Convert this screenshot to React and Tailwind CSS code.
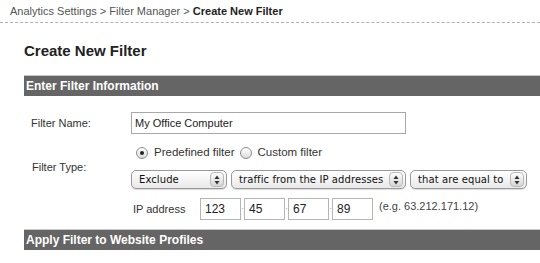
import React from 'react'

// Aqua-style stepper arrows on the right of a select
function Arrows() {
  return (
    <span className="flex h-[15px] w-[14px] shrink-0 items-center justify-center rounded-[4px] border border-[#b9b9b9] bg-gradient-to-b from-[#fdfdfd] to-[#d6d6d6]">
      <svg width="6" height="10" viewBox="0 0 6 10">
        <path d="M3 0.5 L5.5 4 L0.5 4 Z" fill="#333" />
        <path d="M3 9.5 L5.5 6 L0.5 6 Z" fill="#333" />
      </svg>
    </span>
  )
}

function Select({ label, width }) {
  return (
    <div
      className={`flex h-[19px] items-center justify-between rounded-[5px] border border-[#9a9a9a] bg-gradient-to-b from-white to-[#e9e9e9] pl-[7px] pr-[2px] font-['DejaVu_Sans',sans-serif] text-[10px] tracking-[0.1px] text-[#111] shadow-[0_1px_1px_rgba(0,0,0,0.15)] ${width}`}
    >
      <span className="whitespace-nowrap">{label}</span>
      <Arrows />
    </div>
  )
}

function Radio({ checked }) {
  return (
    <span className="flex h-[12px] w-[12px] items-center justify-center rounded-full border border-[#8d8d8d] bg-gradient-to-b from-white to-[#dcdcdc]">
      {checked && <span className="h-[4px] w-[4px] rounded-full bg-[#222]" />}
    </span>
  )
}

function IpBox({ value }) {
  return (
    <div className="flex h-[22px] w-[41px] items-center border border-[#b5b5b5] pl-[4px] text-[12px] text-[#222]">
      {value}
    </div>
  )
}

export default function App() {
  return (
    <div className="h-[263px] w-[540px] overflow-hidden bg-white font-['Liberation_Sans',Arial,sans-serif] text-[#333]">
      {/* breadcrumb */}
      <div className="h-[23px] border-b border-dashed border-[#b0b0b0] pl-[10px] pt-[4px] text-[11px] leading-[15px] text-[#555]">
        Analytics Settings &gt; Filter Manager &gt; <b className="text-[#222]">Create New Filter</b>
      </div>

      <div className="pl-[24px]">
        <h1 className="mt-[19px] text-[15px] font-bold leading-[17px] text-[#222]">Create New Filter</h1>

        <div className="mt-[16px] h-[21px] border-t border-[#c8c8c8] bg-[#656565] pl-[2px] text-[12px] font-bold leading-[20px] text-white">
          Enter Filter Information
        </div>

        {/* Filter Name */}
        <div className="mt-[16px] flex items-center text-[11px]">
          <div className="w-[107px] pl-[7px]">Filter Name:</div>
          <div className="flex h-[22px] w-[275px] items-center border border-[#a8a8a8] pl-[3px] text-[11px] text-[#222]">
            My Office Computer
          </div>
        </div>

        {/* Filter Type */}
        <div className="mt-[12px] flex items-center text-[11px]">
          <div className="w-[107px] pl-[8px]">Filter Type:</div>
          <div className="flex flex-col">
            <div className="flex h-[14px] items-center pl-[5px]">
              <Radio checked />
              <span className="ml-[6px] text-[11.5px]">Predefined filter</span>
              <span className="ml-[5px]">
                <Radio />
              </span>
              <span className="ml-[6px] text-[11.5px]">Custom filter</span>
            </div>
            <div className="mt-[10px] flex gap-[4px]">
              <Select label="Exclude" width="w-[96px]" />
              <Select label="traffic from the IP addresses" width="w-[175px]" />
              <Select label="that are equal to" width="w-[117px]" />
            </div>
          </div>
        </div>

        {/* IP address */}
        <div className="mt-[9px] flex items-center pl-[109px] text-[11px]">
          <span className="w-[67px]">IP address</span>
          <IpBox value="123" />
          <span className="w-[3px] text-center text-[8px] leading-none text-[#888]">·</span>
          <IpBox value="45" />
          <span className="w-[3px] text-center text-[8px] leading-none text-[#888]">·</span>
          <IpBox value="67" />
          <span className="w-[3px] text-center text-[8px] leading-none text-[#888]">·</span>
          <IpBox value="89" />
          <span className="ml-[6px] -mt-[6px] text-[11px] text-[#444]">(e.g. 63.212.171.12)</span>
        </div>

        <div className="mt-[9px] h-[21px] border-t border-[#c8c8c8] bg-[#656565] pl-[2px] text-[12px] font-bold leading-[20px] text-white">
          Apply Filter to Website Profiles
        </div>
      </div>
    </div>
  )
}
